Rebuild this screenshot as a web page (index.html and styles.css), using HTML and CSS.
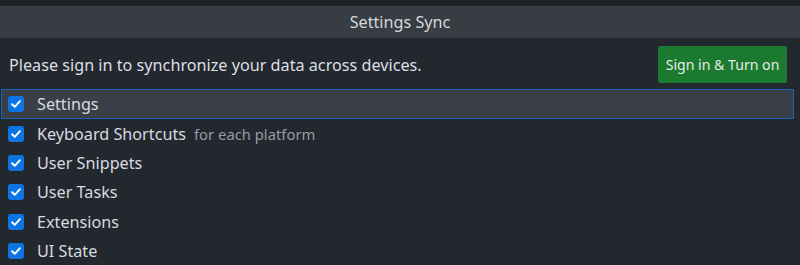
FILE: index.html
```html
<!DOCTYPE html>
<html>
<head>
<meta charset="utf-8">
<link rel="stylesheet" href="styles.css">
</head>
<body>
<div class="topstrip"></div>
<div class="header">Settings Sync</div>
<div class="intro">
  <span class="intro-text">Please sign in to synchronize your data across devices.</span>
  <button class="btn">Sign in &amp; Turn on</button>
</div>
<ul class="list">
  <li class="item selected"><span class="cb"><svg viewBox="0 0 16 16"><path d="M3.5 8.3 L6.6 11.2 L12.5 4.8" /></svg></span><span class="label">Settings</span></li>
  <li class="item"><span class="cb"><svg viewBox="0 0 16 16"><path d="M3.5 8.3 L6.6 11.2 L12.5 4.8" /></svg></span><span class="label">Keyboard Shortcuts</span><span class="desc">for each platform</span></li>
  <li class="item"><span class="cb"><svg viewBox="0 0 16 16"><path d="M3.5 8.3 L6.6 11.2 L12.5 4.8" /></svg></span><span class="label">User Snippets</span></li>
  <li class="item"><span class="cb"><svg viewBox="0 0 16 16"><path d="M3.5 8.3 L6.6 11.2 L12.5 4.8" /></svg></span><span class="label">User Tasks</span></li>
  <li class="item"><span class="cb"><svg viewBox="0 0 16 16"><path d="M3.5 8.3 L6.6 11.2 L12.5 4.8" /></svg></span><span class="label">Extensions</span></li>
  <li class="item"><span class="cb"><svg viewBox="0 0 16 16"><path d="M3.5 8.3 L6.6 11.2 L12.5 4.8" /></svg></span><span class="label">UI State</span></li>
</ul>
</body>
</html>
```

FILE: styles.css
```css
html, body {
  margin: 0;
  padding: 0;
  background: #23272e;
  height: 265px;
  overflow: hidden;
}
body {
  font-family: "Noto Sans", "Open Sans", sans-serif;
  color: #d7dae0;
}
.topstrip {
  height: 6px;
  background: #1e2126;
}
.header {
  height: 32px;
  background: #383c43;
  display: flex;
  align-items: center;
  justify-content: center;
  font-size: 16.2px;
  color: #d4d7dc;
}
.intro {
  display: flex;
  align-items: center;
  justify-content: space-between;
  padding: 8px 13px 6px 9px;
  height: 51px;
  box-sizing: border-box;
}
.intro-text {
  font-size: 16.2px;
  color: #dcdfe4;
}
.btn {
  font-family: inherit;
  font-size: 14.1px;
  color: #e3ebe5;
  background: #1b7a30;
  border: none;
  border-radius: 2px;
  width: 129px;
  height: 37px;
  padding: 0;
}
.list {
  list-style: none;
  margin: 0;
  padding: 0 6px 0 1px;
}
.item {
  height: 29.4px;
  display: flex;
  align-items: center;
  padding-left: 7px;
  box-sizing: border-box;
  font-size: 16.2px;
}
.item.selected {
  background: #3a3f47;
  border: 1px solid #1463b4;
  padding-left: 6px;
  height: 30px;
}
.cb {
  width: 16px;
  height: 16px;
  border-radius: 3px;
  background: #0c74e4;
  display: flex;
  align-items: center;
  justify-content: center;
  margin-right: 13px;
}
.cb svg {
  width: 14px;
  height: 14px;
  fill: none;
  stroke: #ffffff;
  stroke-width: 2.2;
  stroke-linecap: round;
  stroke-linejoin: round;
}
.label {
  color: #d7dae0;
}
.desc {
  color: #959ba5;
  font-size: 14.8px;
  margin-left: 8px;
}
```
